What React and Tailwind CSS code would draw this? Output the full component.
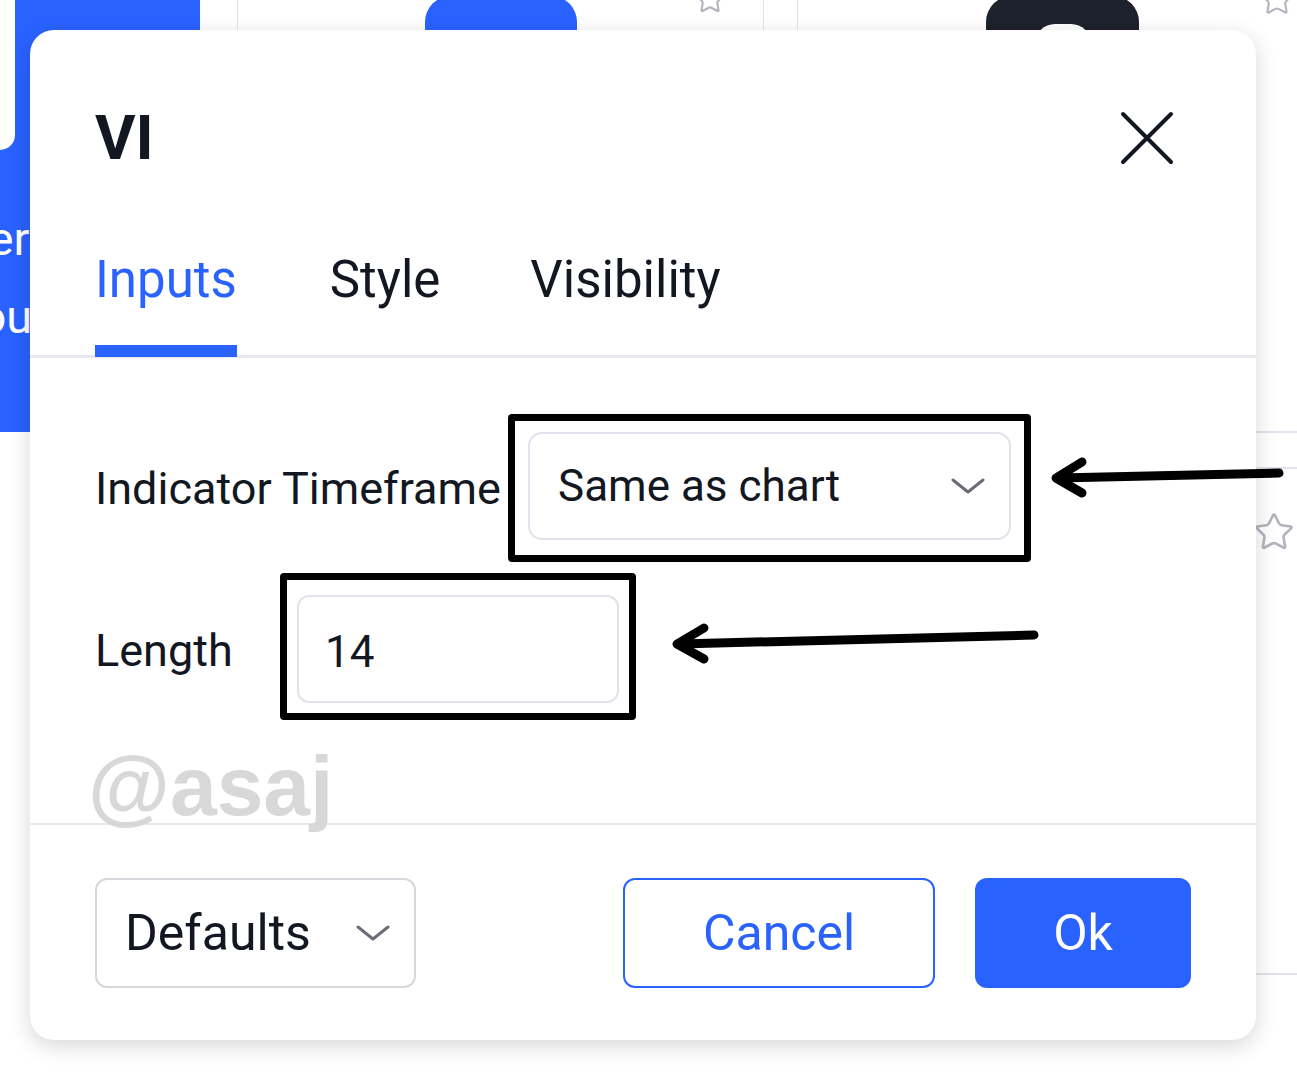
import React from "react";
import { Star } from "lucide-react";

function Chevron({ className }) {
  return (
    <svg viewBox="0 0 34 18" className={className} fill="none">
      <path d="M2 3 L17 15 L32 3" stroke="#6a6d78" strokeWidth="3" strokeLinecap="round" strokeLinejoin="round" />
    </svg>
  );
}

function Backdrop() {
  return (
    <div className="flex h-[1000px]">
      <div className="w-[200px]">
        <div className="h-[432px] bg-[#2962ff] overflow-hidden">
          <div className="w-[15px] h-[150px] bg-white rounded-br-[22px]" />
          <div className="mt-[50px] text-white text-[47px] leading-[78px] whitespace-nowrap">
            <div className="-ml-[103px]">Power</div>
            <div className="-ml-[54px]">Hour</div>
          </div>
        </div>
      </div>
      <div className="relative ml-[37px] w-[527px] border-x border-[#e0e3eb] flex justify-center">
        <div className="w-[152px] h-[60px] -mt-[4px] rounded-[26px] bg-[#2962ff]" />
        <Star className="absolute right-[37px] -top-[17px] w-[32px] h-[32px] text-[#b2b5be]" strokeWidth={1.6} />
      </div>
      <div className="relative ml-[33px] w-[500px] border-l border-[#e0e3eb] flex flex-col">
        <div className="h-[433px] border-b-2 border-[#e0e3eb]">
          <div className="ml-[188px] w-[153px] h-[60px] -mt-[4px] rounded-[26px] bg-[#1e222d] overflow-hidden">
            <div className="mx-auto mt-[28px] w-[56px] h-[40px] rounded-full bg-white" />
          </div>
        </div>
        <div className="h-[36px] border-b-2 border-[#e0e3eb]" />
        <div className="h-[506px] border-b-2 border-[#e0e3eb] flex justify-end pr-[2px] pt-[42px]">
          <Star className="w-[42px] h-[42px] text-[#b2b5be]" strokeWidth={1.5} />
        </div>
        <Star className="absolute right-[0px] -top-[19px] w-[40px] h-[36px] text-[#b2b5be]" strokeWidth={1.4} />
      </div>
    </div>
  );
}

export default function App() {
  return (
    <div className="relative w-[1297px] h-[1080px] overflow-hidden bg-white font-['Roboto',sans-serif] text-[#131722]">
      <Backdrop />

      {/* dialog */}
      <div className="absolute left-[30px] top-[30px] w-[1226px] h-[1010px] bg-white rounded-[24px] shadow-[0_6px_22px_rgba(0,0,0,0.16)] flex flex-col">
        <div className="pt-[60px] px-[65px] flex items-center justify-between h-[156px]">
          <h1 className="text-[62px] font-bold leading-none">VI</h1>
          <svg viewBox="0 0 54 54" className="w-[54px] h-[54px] mr-[17px]" fill="none">
            <path d="M3 3 L51 51 M51 3 L3 51" stroke="#131722" strokeWidth="4" strokeLinecap="round" />
          </svg>
        </div>

        <div className="mt-[68px] pl-[65px] flex gap-[93px] border-b-[3px] border-[#e6e8ee]">
          <div className="flex flex-col">
            <span className="text-[51px] leading-none text-[#2962ff]">Inputs</span>
            <div className="mt-[40px] h-[12px] -mb-[2px] bg-[#2962ff]" />
          </div>
          <span className="text-[51px] leading-none">Style</span>
          <span className="text-[51px] leading-none -ml-[3px]">Visibility</span>
        </div>

        <div className="mt-[56px] px-[65px] flex flex-col gap-[11px]">
          <div className="flex items-center">
            <span className="w-[413px] text-[45px] leading-none whitespace-nowrap">Indicator Timeframe</span>
            <div className="w-[523px] h-[148px] border-[7px] border-black rounded-[4px] px-[13px] pt-[11px] pb-[15px]">
              <div className="h-full rounded-[14px] border-2 border-[#e0e3eb] flex items-center justify-between pl-[28px] pr-[24px]">
                <span className="text-[44px] leading-none">Same as chart</span>
                <Chevron className="w-[34px] h-[18px]" />
              </div>
            </div>
          </div>
          <div className="flex items-center">
            <span className="w-[185px] text-[45px] leading-none pt-[8px]">Length</span>
            <div className="w-[356px] h-[147px] border-[7px] border-black rounded-[4px] px-[10px] pt-[15px] pb-[10px]">
              <div className="h-full rounded-[12px] border-2 border-[#e0e3eb] flex items-center pl-[26px]">
                <span className="text-[44px] leading-none pt-[6px]">14</span>
              </div>
            </div>
          </div>
        </div>

        <div className="mt-auto border-t-2 border-[#e6e8ee] px-[65px] pt-[53px] pb-[52px] flex items-center">
          <div className="w-[321px] h-[110px] rounded-[12px] border-2 border-[#d6d8de] flex items-center justify-between pl-[28px] pr-[24px]">
            <span className="text-[50px] leading-none">Defaults</span>
            <Chevron className="w-[34px] h-[18px]" />
          </div>
          <div className="ml-auto w-[312px] h-[110px] rounded-[12px] border-2 border-[#2962ff] flex items-center justify-center text-[50px] leading-none text-[#2962ff]">
            Cancel
          </div>
          <div className="ml-[40px] w-[216px] h-[110px] rounded-[12px] bg-[#2962ff] flex items-center justify-center text-[50px] leading-none text-white">
            Ok
          </div>
        </div>

        <div className="absolute left-[58px] top-[714px] text-[84px] font-bold leading-none text-[#d4d4d4]/90 font-['Liberation_Sans',sans-serif] pointer-events-none">
          @asaj
        </div>
      </div>

      {/* annotation arrows */}
      <svg className="absolute inset-0 w-[1297px] h-[1080px] pointer-events-none" viewBox="0 0 1297 1080" fill="none">
        <g stroke="#000" strokeWidth="9" strokeLinecap="round" strokeLinejoin="round">
          <path d="M1279 473 L1058 478" />
          <path d="M1082 462 L1056 478 L1082 493" />
          <path d="M1034 635 L680 644" />
          <path d="M704 628 L677 644 L704 659" />
        </g>
      </svg>
    </div>
  );
}
